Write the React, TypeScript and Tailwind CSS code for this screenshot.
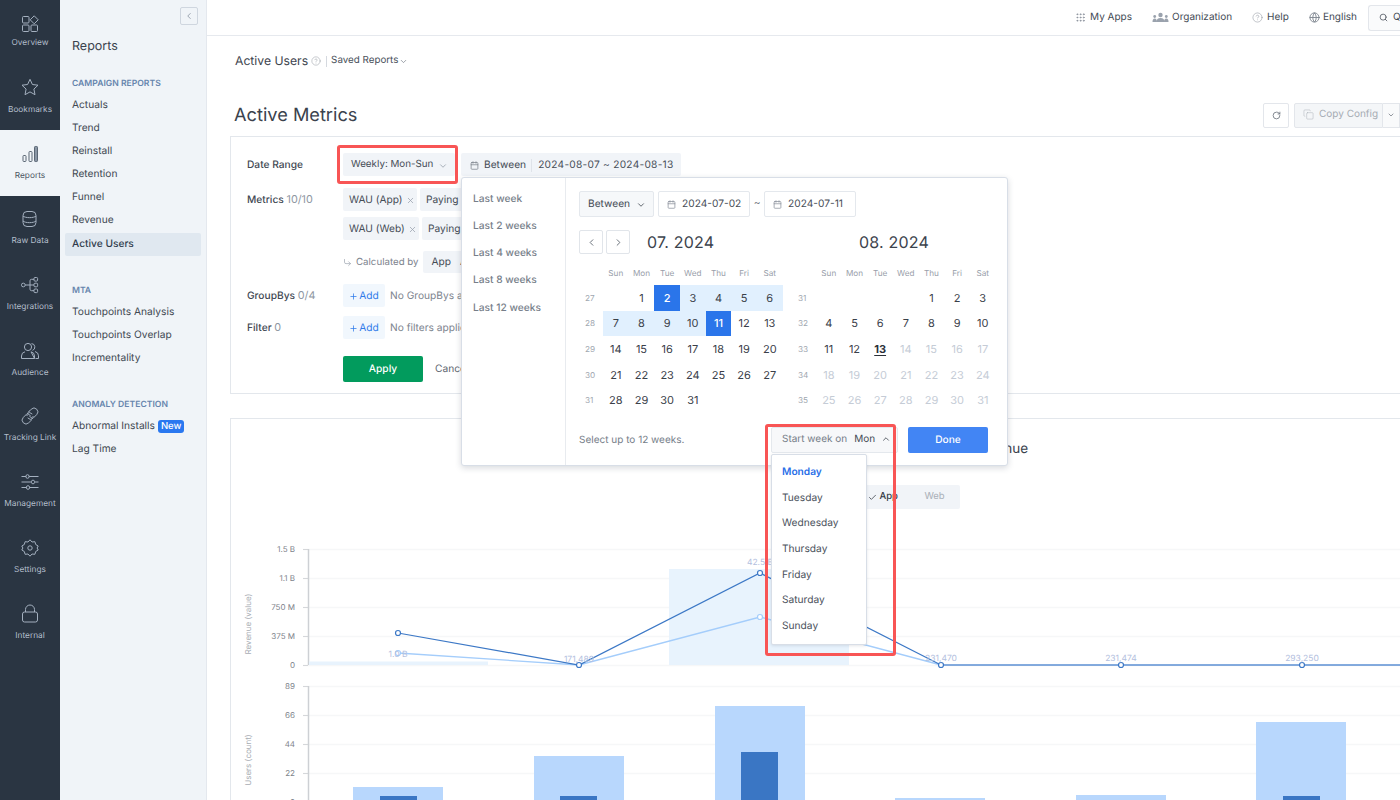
import React from "react";
import { ChevronDown, ChevronUp, ChevronLeft, ChevronRight, Calendar, X, Plus, Check, Search, RotateCw, Copy, CircleHelp, Globe, Grip, CornerDownRight } from "lucide-react";

const S = { fill: "none", stroke: "currentColor", strokeWidth: 1 } as const;
const RailIcons: Record<string, React.ReactNode> = {
  Overview: (
    <svg width="20" height="20" viewBox="0 0 20 20" {...S}>
      <rect x="2.5" y="2.5" width="6.5" height="6.5" rx="1" />
      <rect x="2.5" y="11" width="6.5" height="6.5" rx="1" />
      <rect x="11" y="11" width="6.5" height="6.5" rx="1" />
      <path d="M14.2 1.8l4 4-4 4-4-4z" />
    </svg>
  ),
  Bookmarks: (
    <svg width="20" height="20" viewBox="0 0 20 20" {...S}>
      <path d="M10 2.3l2.4 5.2 5.6.7-4.1 3.9 1.1 5.6-5-2.8-5 2.8 1.1-5.6L2 8.2l5.6-.7z" />
    </svg>
  ),
  Reports: (
    <svg width="20" height="20" viewBox="0 0 20 20" {...S} stroke="#5b6775">
      <rect x="3" y="11.5" width="3" height="6" rx=".8" />
      <rect x="9" y="7.5" width="3" height="10" rx=".8" />
      <rect x="14.5" y="2.5" width="3" height="15" rx=".8" fill="#8a96a5" />
    </svg>
  ),
  "Raw Data": (
    <svg width="20" height="20" viewBox="0 0 20 20" {...S}>
      <rect x="3" y="2.5" width="13" height="15" rx="4" />
      <path d="M3 7c2 2.2 11 2.2 13 0M3 12c2 2.2 11 2.2 13 0" />
    </svg>
  ),
  Integrations: (
    <svg width="20" height="20" viewBox="0 0 20 20" {...S}>
      <rect x="1.5" y="8.2" width="3.6" height="3.6" rx="1.6" />
      <rect x="14" y="2.5" width="3.6" height="3.6" rx="1" />
      <rect x="14" y="8.2" width="3.6" height="3.6" rx="1" />
      <rect x="14" y="14" width="3.6" height="3.6" rx="1" />
      <path d="M5 10h9M14 4.3h-2.5q-1.500 0-1.500 1.500v8.400q0 1.500 1.500 1.500H14" />
    </svg>
  ),
  Audience: (
    <svg width="20" height="20" viewBox="0 0 20 20" {...S}>
      <circle cx="8" cy="6" r="3.600" />
      <path d="M1.500 17.500v-2.500q0-3.500 3.500-4.200M11 10.800q3.500.7 3.500 4.200v2.500zM1.500 17.500h13M11.500 2.600a3.500 3.500 0 0 1 1 6.800M15 10.500q3.500.9 3.500 4.300v2.700h-3" />
    </svg>
  ),
  "Tracking Link": (
    <svg width="20" height="20" viewBox="0 0 20 20" {...S}>
      <path d="M8 6.500l3.300-3.300a3.800 3.800 0 0 1 5.400 5.400l-3.600 3.600a3.800 3.800 0 0 1-5.400-.3M12 13.500l-3.300 3.300a3.800 3.800 0 0 1-5.400-5.400l3.600-3.600a3.800 3.800 0 0 1 5.400.3" />
      <path d="M9.500 5l-1 .9M6.500 9.500a2.800 2.800 0 0 1 4 0M9.500 10.500a2.800 2.800 0 0 0 4 0" />
    </svg>
  ),
  Management: (
    <svg width="20" height="20" viewBox="0 0 20 20" {...S}>
      <path d="M1.500 4.500h4.500M9 4.500h9.500M1.500 10h10M14.500 10h4M1.500 15.500h5M9.500 15.500h9" />
      <rect x="6" y="2.700" width="3" height="3.600" rx="1.400" />
      <rect x="11.500" y="8.200" width="3" height="3.600" rx="1.400" />
      <rect x="6.500" y="13.700" width="3" height="3.600" rx="1.400" />
    </svg>
  ),
  Settings: (
    <svg width="20" height="20" viewBox="0 0 20 20" {...S}>
      <path d="M10 1.800l2 2.200 2.900-.3.800 2.800 2.500 1.500-1.100 2 1.100 2-2.500 1.500-.8 2.800-2.900-.3-2 2.200-2-2.200-2.900.3-.8-2.800-2.500-1.500 1.100-2-1.100-2 2.500-1.500.8-2.800 2.900.3z" />
      <circle cx="10" cy="10" r="2.200" />
    </svg>
  ),
  Internal: (
    <svg width="20" height="20" viewBox="0 0 20 20" {...S}>
      <rect x="2.500" y="8" width="15" height="10" rx="2" />
      <path d="M5.500 8V5.500a4.500 4.500 0 0 1 9 0V8" />
    </svg>
  ),
};

const rail = ["Overview", "Bookmarks", "Reports", "Raw Data", "Integrations", "Audience", "Tracking Link", "Management", "Settings", "Internal"];

function Rail() {
  return (
    <aside className="w-[60px] h-full shrink-0 bg-[#2a3542] flex flex-col">
      {rail.map((r, i) => {
        const on = r === "Reports";
        return (
          <div
            key={r}
            className={`flex flex-col items-center justify-end ${i === 0 ? "h-[63px] gap-[3px] pb-[14px]" : i === 1 ? "h-[67px] gap-[7px] pb-[14px]" : "h-[65.7px] gap-[6px] pb-[14px]"} ${on ? "bg-[#f0f4f8] text-[#5b6775]" : "text-[#a4b0bf]"}`}
          >
            {RailIcons[r]}
            <span className={`text-[8.300px] leading-[12px] whitespace-nowrap ${on ? "text-[#4a5562]" : "text-[#b4bfcc]"}`}>{r}</span>
          </div>
        );
      })}
    </aside>
  );
}

function NavSection({ title, items, className }: { title: string; items: string[]; className: string }) {
  return (
    <div className={className}>
      <div className="pl-[7px] text-[8.600px] leading-[12px] font-semibold text-[#6685ad] mb-[4px]">{title}</div>
      {items.map((t) => {
        const on = t === "Active Users";
        return (
          <div key={t} className={`h-[23px] pl-[7px] flex items-center text-[10.2px] rounded-[2px] ${on ? "mt-[1px] bg-[#e0e8f0] font-medium text-[#2f3b4b]" : "text-[#414852]"}`}>
            {t}
            {t === "Abnormal Installs" && (
              <span className="ml-[3px] h-[13px] px-[3px] rounded-[3px] bg-[#2a78f0] text-white text-[9.500px] leading-[13px] font-medium">New</span>
            )}
          </div>
        );
      })}
    </div>
  );
}

function SubNav() {
  return (
    <aside className="w-[147px] h-full shrink-0 bg-[#f0f4f8] border-r border-[#e4e8ee] relative px-[5px]">
      <div className="absolute left-[120px] top-[7px] w-[18px] h-[18px] border border-[#cfd6df] rounded-[2px] flex items-center justify-center text-[#8b95a2]">
        <ChevronLeft size={10} />
      </div>
      <div className="pl-[7px] pt-[38px] text-[12.500px] leading-[17px] text-[#3a424d]">Reports</div>
      <NavSection className="mt-[23px]" title="CAMPAIGN REPORTS" items={["Actuals", "Trend", "Reinstall", "Retention", "Funnel", "Revenue", "Active Users"]} />
      <NavSection className="mt-[29px]" title="MTA" items={["Touchpoints Analysis", "Touchpoints Overlap", "Incrementality"]} />
      <NavSection className="mt-[29px]" title="ANOMALY DETECTION" items={["Abnormal Installs", "Lag Time"]} />
    </aside>
  );
}

function TopBar() {
  const ItemCls = "flex items-center text-[10px] text-[#444b55] whitespace-nowrap";
  return (
    <header className="h-[36px] shrink-0 border-b border-[#e6e9ee] flex items-center justify-end bg-white overflow-hidden">
      <div className={`${ItemCls} gap-[4px] mr-[20px]`}><Grip size={11} className="text-[#8b929c]" />My Apps</div>
      <div className={`${ItemCls} gap-[3px] mr-[20px]`}>
        <svg width="17" height="11" viewBox="0 0 17 11" fill="#9aa2ad"><circle cx="8.500" cy="3" r="2.200" /><path d="M4.500 10q0-4 4-4t4 4z" /><circle cx="2.700" cy="4.500" r="1.400" /><path d="M.5 10q0-3.500 2.200-3.500T5 10z" /><circle cx="14.300" cy="4.500" r="1.400" /><path d="M12 10q0-3.500 2.300-3.500t2.200 3.500z" /></svg>
        Organization
      </div>
      <div className={`${ItemCls} gap-[4px] mr-[20px]`}><CircleHelp size={11} strokeWidth={1} className="text-[#7d848e]" />Help</div>
      <div className={`${ItemCls} gap-[3px] mr-[11px]`}><Globe size={11} className="text-[#7d848e]" />English</div>
      <div className="h-[26px] w-[32px] border border-r-0 border-[#e3e6eb] rounded-l-[3px] bg-[#fafbfc] flex items-center pl-[10px] gap-[5px] text-[10px] text-[#444b55] overflow-hidden">
        <Search size={9} className="shrink-0" />Q
      </div>
    </header>
  );
}

function Chip({ children, className = "" }: { children: React.ReactNode; className?: string }) {
  return <div className={`h-[23px] rounded-[2px] bg-[#f1f4f8] flex items-center pt-[2px] text-[10.2px] text-[#454c56] whitespace-nowrap ${className}`}>{children}</div>;
}

function Label({ name, count }: { name: string; count?: string }) {
  return (
    <div className="w-[112px] shrink-0 pl-[16px] pt-[2px] text-[10.2px] font-medium text-[#414852] whitespace-nowrap">
      {name} {count && <span className="font-normal text-[10.800px] text-[#8e96a1]">{count}</span>}
    </div>
  );
}

function AddBtn() {
  return (
    <div className="h-[23px] w-[42px] rounded-[2px] bg-[#f1f7fd] flex items-center justify-center gap-[1px] pt-[2px] text-[10.2px] text-[#2f7bea]">
      <Plus size={9} />Add
    </div>
  );
}

function FormCard() {
  return (
    <section className="h-[258px] w-[1300px] border border-[#e3e7ec] pt-[16px] flex flex-col shrink-0">
      <div className="flex items-center h-[23px]">
        <Label name="Date Range" />
        <Chip className="w-[112px] pl-[8px] !text-[9.800px]">
          Weekly: Mon-Sun
          <ChevronDown size={10} className="ml-[5px] text-[#9aa2ad]" />
        </Chip>
        <Chip className="ml-[6px] w-[220px] pl-[9px]">
          <Calendar size={9} className="text-[#7d848e]" />
          <span className="ml-[5px]">Between</span>
          <span className="h-[13px] w-px bg-[#dfe3e9] ml-[5px] mr-[6px]" />
          <span className="tracking-[0.25px]">2024-08-07 ~ 2024-08-13</span>
        </Chip>
      </div>
      <div className="flex mt-[12px] h-[52px]">
        <div className="pt-[3px] leading-[13px]"><Label name="Metrics" count="10/10" /></div>
        <div className="flex flex-col gap-[6px]">
          <div className="flex gap-[3px]">
            <Chip className="w-[74px] pl-[6px]">WAU (App)<X size={9} className="ml-[3px] text-[#9aa2ad]" /></Chip>
            <Chip className="w-[90px] pl-[6px]">Paying</Chip>
          </div>
          <div className="flex gap-[3px]">
            <Chip className="w-[76px] pl-[6px]">WAU (Web)<X size={9} className="ml-[3px] text-[#9aa2ad]" /></Chip>
            <Chip className="w-[90px] pl-[6px]">Paying</Chip>
          </div>
        </div>
      </div>
      <div className="flex items-center mt-[11px] h-[22px] pl-[112px] text-[9.700px] text-[#7d848e] whitespace-nowrap">
        <CornerDownRight size={9} className="mr-[4px] text-[#a3aab4]" />
        <span className="pt-[2px]">Calculated by</span>
        <Chip className="ml-[5px] w-[90px] !h-[22px] pl-[8px]">App<span className="ml-[9px]">All</span></Chip>
      </div>
      <div className="flex items-center mt-[11px] h-[23px]">
        <Label name="GroupBys" count="0/4" />
        <AddBtn />
        <span className="ml-[5px] pt-[2px] text-[10.2px] text-[#7d848e] whitespace-nowrap">No GroupBys applied</span>
      </div>
      <div className="flex items-center mt-[9px] h-[23px]">
        <Label name="Filter" count="0" />
        <AddBtn />
        <span className="ml-[5px] pt-[2px] text-[10.2px] text-[#7d848e] whitespace-nowrap">No filters applied</span>
      </div>
      <div className="flex items-center mt-[17px] pl-[112px]">
        <div className="h-[26px] w-[80px] rounded-[2px] bg-[#029b5d] pt-[1px] text-white text-[10.2px] font-medium flex items-center justify-center">Apply</div>
        <span className="ml-[12px] pt-[1px] text-[10.2px] text-[#5f6771]">Cancel</span>
      </div>
    </section>
  );
}

function Charts() {
  const ox = 231, oy = 530;
  const revTicks: [number, string][] = [[549, "1.5 B"], [578, "1.1 B"], [607, "750 M"], [636, "375 M"], [665, "0"]];
  const useTicks: [number, string][] = [[686, "89"], [715, "66"], [744, "44"], [773, "22"], [802, "0"]];
  const bars = [
    [353, 787, 380, 796], [534, 756, 560, 796], [715, 706, 741, 752],
    [895, 798, 0, 0], [1076, 795, 0, 0], [1256, 722, 1283, 796],
  ];
  const labels: [number, number, string][] = [[398, 657, "1.0 B"], [579, 662, "171,489"], [760, 565, "42.5 B"], [941, 661, "231,470"], [1121, 661, "231,474"], [1302, 661, "293,250"]];
  return (
    <svg width="1170" height="272" viewBox={`${ox} ${oy} 1170 272`} className="block" fontFamily="Inter, sans-serif">
      {[...revTicks, ...useTicks].map(([y, t]) => (
        <g key={y}>
          <line x1="303" x2="1400" y1={y + 0.5} y2={y + 0.5} stroke="#f6f7f8" strokeWidth="1.500" />
          <line x1="303" x2="308" y1={y + 0.5} y2={y + 0.5} stroke="#d5d7da" />
          <text x="295" y={y + 3} textAnchor="end" fontSize="8" fill="#7c828a">{t}</text>
        </g>
      ))}
      <line x1="308.500" x2="308.500" y1="549" y2="665" stroke="#cdd0d4" strokeWidth="1.500" />
      <line x1="308.500" x2="308.500" y1="686" y2="802" stroke="#cdd0d4" strokeWidth="1.500" />
      <text transform="translate(251 624) rotate(-90)" textAnchor="middle" fontSize="8" fill="#a8adb4">Revenue (value)</text>
      <text transform="translate(251 760) rotate(-90)" textAnchor="middle" fontSize="8" fill="#a8adb4">Users (count)</text>

      <rect x="309" y="661.500" width="179" height="3.500" fill="#e8f3fd" />
      <rect x="669" y="569" width="180" height="96" fill="#e8f3fd" />
      <polyline points="398,653 579,665 760,617 941,665" fill="none" stroke="#a4cdfb" strokeWidth="1.300" />
      <polyline points="398,633 579,665 760,573 941,665" fill="none" stroke="#3c78c6" strokeWidth="1.200" />
      <line x1="941" x2="1400" y1="665" y2="665" stroke="#5b8fd3" strokeWidth="1.500" />
      <circle cx="398" cy="653" r="2.500" fill="#fff" stroke="#a4cdfb" strokeWidth="1.200" />
      <circle cx="760" cy="617" r="2.500" fill="#fff" stroke="#a4cdfb" strokeWidth="1.200" />
      {[[398, 633], [579, 665], [760, 573], [941, 665], [1121, 665], [1302, 665]].map(([x, y]) => (
        <circle key={x} cx={x} cy={y} r="2.500" fill="#fff" stroke="#3c78c6" strokeWidth="1.200" />
      ))}
      {labels.map(([x, y, t]) => (
        <text key={x} x={x} y={y} textAnchor="middle" fontSize="8.500" fill="#b3c0de">{t}</text>
      ))}

      {bars.map(([x, top, dx, dtop]) => (
        <g key={x}>
          <rect x={x} y={top} width="90" height={802 - top} fill="#b8d7fd" />
          {dx > 0 && <rect x={dx} y={dtop} width="37" height={802 - dtop} fill="#3a76c4" />}
        </g>
      ))}
    </svg>
  );
}

function ChartCard() {
  return (
    <section className="mt-[24px] w-[1300px] flex-1 border border-[#e3e7ec] border-b-0 flex flex-col shrink-0">
      <div className="pl-[742px] pt-[21px] h-[66px] text-[13.500px] leading-[18px] text-[#3a424d] whitespace-nowrap">Revenue</div>
      <div className="ml-[614px] w-[115px] h-[24px] rounded-[2px] bg-[#f1f4f8] flex items-center text-[9.500px]">
        <div className="w-[53px] flex items-center justify-end gap-[3px] text-[#333a44] font-medium"><Check size={9} />App</div>
        <div className="flex-1 text-center pl-[11px] text-[#a9afb7]">Web</div>
      </div>
      <div className="mt-[21px]"><Charts /></div>
    </section>
  );
}

const inputCls = "h-[26px] border border-[#e4e8ed] rounded-[2px] flex items-center pt-[1px] text-[10.2px] text-[#454c56] whitespace-nowrap";

type Cell = { d?: number; kind?: "sel" | "range" | "off" | "today" };

function Month({ weeks, nums }: { weeks: Cell[][]; nums: number[] }) {
  const names = ["Sun", "Mon", "Tue", "Wed", "Thu", "Fri", "Sat"];
  return (
    <div className="w-[198px]">
      <div className="flex pl-[18px] h-[13px] items-center mt-[1px]">
        {names.map((n) => (
          <div key={n} className="w-[25.67px] text-center text-[8.200px] text-[#99a0aa]">{n}</div>
        ))}
      </div>
      <div className="mt-[5px]">
        {weeks.map((w, i) => (
          <div key={i} className="flex h-[25.7px] items-stretch">
            <div className="w-[18px] shrink-0 flex items-center text-[8.200px] text-[#a0a7b0]">{nums[i]}</div>
            {w.map((c, j) => {
              const k = c.kind;
              const cls =
                k === "sel" ? "bg-[#2a75ea] text-white font-medium" :
                k === "range" ? "bg-[#e1f0fe] text-[#3a4049]" :
                k === "off" ? "text-[#c5ccd6]" :
                k === "today" ? "text-[#2b3038] font-bold underline underline-offset-2" : "text-[#3a4049]";
              return <div key={j} className={`w-[25.67px] flex items-center justify-center text-[11px] ${cls}`}>{c.d}</div>;
            })}
          </div>
        ))}
      </div>
    </div>
  );
}

function rows(first: number, total: number, f: (d: number) => Cell["kind"]): Cell[][] {
  const out: Cell[][] = [];
  let cur: Cell[] = Array.from({ length: first }, () => ({}));
  for (let d = 1; d <= total; d++) {
    cur.push({ d, kind: f(d) });
    if (cur.length === 7) { out.push(cur); cur = []; }
  }
  if (cur.length) { while (cur.length < 7) cur.push({}); out.push(cur); }
  return out;
}

const july = rows(1, 31, (d) => (d === 2 || d === 11 ? "sel" : d > 2 && d < 11 ? "range" : undefined));
const aug = rows(4, 31, (d) => (d === 13 ? "today" : d > 13 ? "off" : undefined));

function Popover() {
  return (
    <div className="absolute left-[461px] top-[177px] w-[547px] h-[289px] bg-white border border-[#d8dee7] rounded-[3px] shadow-[0_2px_6px_rgba(40,50,70,0.18)] flex">
      <div className="w-[104px] shrink-0 border-r border-[#e8ebef] pt-[13.500px] pl-[11px] flex flex-col gap-[11.200px]">
        {["Last week", "Last 2 weeks", "Last 4 weeks", "Last 8 weeks", "Last 12 weeks"].map((t) => (
          <div key={t} className="h-[16px] flex items-center text-[10.2px] font-medium text-[#767e89] whitespace-nowrap">{t}</div>
        ))}
      </div>
      <div className="flex-1 pl-[13px] pt-[13px] flex flex-col">
        <div className="flex items-center">
          <div className={`${inputCls} w-[75px] pl-[8px] bg-[#f6f8fa] gap-[6px]`}>Between<ChevronDown size={10} /></div>
          <div className={`${inputCls} w-[92px] ml-[4px] pl-[8px] gap-[6px]`}><Calendar size={9} className="text-[#8b929c]" />2024-07-02</div>
          <span className="w-[14px] text-center text-[10.2px] text-[#5f6771]">~</span>
          <div className={`${inputCls} w-[92px] pl-[8px] gap-[6px]`}><Calendar size={9} className="text-[#8b929c]" />2024-07-11</div>
        </div>
        <div className="flex items-center mt-[13px] h-[24px]">
          <div className="w-[24px] h-[24px] border border-[#e1e5ea] rounded-[2px] flex items-center justify-center text-[#5f6771]"><ChevronLeft size={11} /></div>
          <div className="w-[24px] h-[24px] ml-[3px] border border-[#e1e5ea] rounded-[2px] flex items-center justify-center text-[#5f6771]"><ChevronRight size={11} /></div>
          <div className="ml-[17px] w-[212px] text-[16px] text-[#3c434d] tracking-[0.2px]">07. 2024</div>
          <div className="text-[16px] text-[#3c434d] tracking-[0.2px]">08. 2024</div>
        </div>
        <div className="flex mt-[12px] pl-[6px] gap-[15px]">
          <Month weeks={july} nums={[27, 28, 29, 30, 31]} />
          <Month weeks={aug} nums={[31, 32, 33, 34, 35]} />
        </div>
        <div className="flex items-center mt-[14px]">
          <span className="w-[192px] text-[10px] text-[#767e89] whitespace-nowrap">Select up to 12 weeks.</span>
          <div className="w-[127px] h-[26px] border border-[#e4e8ed] rounded-[2px] bg-[#f7f8fa] flex items-center pl-[10px] pb-[2px] text-[10px] text-[#767e89] whitespace-nowrap">
            Start week on
            <span className="ml-[7px] text-[#454c56]">Mon</span>
            <ChevronUp size={10} className="ml-[6px] text-[#454c56]" />
          </div>
          <div className="ml-[10px] w-[80px] h-[26px] rounded-[2px] bg-[#4285f4] text-white text-[10.2px] font-medium flex items-center justify-center">Done</div>
        </div>
      </div>
    </div>
  );
}

function WeekMenu() {
  return (
    <div className="absolute left-[771px] top-[454px] w-[96px] h-[191px] bg-white border border-[#d8dee7] rounded-[2px] shadow-[0_1px_3px_rgba(40,50,70,0.12)] pt-[5px]">
      {["Monday", "Tuesday", "Wednesday", "Thursday", "Friday", "Saturday", "Sunday"].map((d) => (
        <div key={d} className={`h-[25.6px] pl-[10px] flex items-center text-[10.2px] ${d === "Monday" ? "text-[#2a6fe8] font-semibold" : "text-[#4a515b]"}`}>{d}</div>
      ))}
    </div>
  );
}

export default function App() {
  return (
    <div className="relative w-[1400px] h-[800px] overflow-hidden bg-white flex [text-rendering:geometricPrecision]" style={{ fontFamily: "Inter, 'Liberation Sans', sans-serif" }}>
      <Rail />
      <SubNav />
      <main className="flex-1 min-w-0 h-full flex flex-col overflow-hidden">
        <TopBar />
        <div className="flex items-center h-[16px] mt-[17px] pl-[28px] whitespace-nowrap">
          <span className="text-[12.200px] text-[#3d444e]">Active Users</span>
          <CircleHelp size={10} strokeWidth={1} className="ml-[3px] text-[#7d848e]" />
          <span className="w-px h-[11px] bg-[#d5d9df] ml-[5px] mr-[4px]" />
          <span className="pt-[1px] text-[9.800px] text-[#4a515b]">Saved Reports</span>
          <ChevronDown size={9} className="ml-[1px] text-[#7d848e]" />
        </div>
        <div className="flex items-center justify-between h-[26px] mt-[33px] pl-[27px] shrink-0">
          <h1 className="text-[18.200px] leading-[26px] text-[#3a424d]">Active Metrics</h1>
          <div className="flex">
            <div className="w-[26px] h-[25px] border border-[#e3e6eb] rounded-[2px] flex items-center justify-center text-[#5f6771]"><RotateCw size={9} /></div>
            <div className="ml-[5px] w-[89px] h-[25px] border border-[#e3e6eb] rounded-l-[2px] bg-[#f4f6f8] flex items-center pl-[8px] pb-[1px] gap-[5px] text-[10px] text-[#a5abb3] whitespace-nowrap"><Copy size={11} strokeWidth={1} />Copy Config</div>
            <div className="w-[17px] h-[25px] border border-l-0 border-[#e3e6eb] bg-[#f9fafb] flex items-center justify-center text-[#5f6771]"><ChevronDown size={8} /></div>
          </div>
        </div>
        <div className="pl-[23px] pt-[8px] flex-1 flex flex-col min-h-0">
          <FormCard />
          <ChartCard />
        </div>
      </main>
      <Popover />
      <WeekMenu />
      <div className="absolute left-[337px] top-[145px] w-[121px] h-[39px] border-[3px] border-[#f85555] rounded-[3px] pointer-events-none" />
      <div className="absolute left-[765px] top-[424px] w-[131px] h-[232px] border-[3px] border-[#f85555] rounded-[3px] pointer-events-none" />
    </div>
  );
}
